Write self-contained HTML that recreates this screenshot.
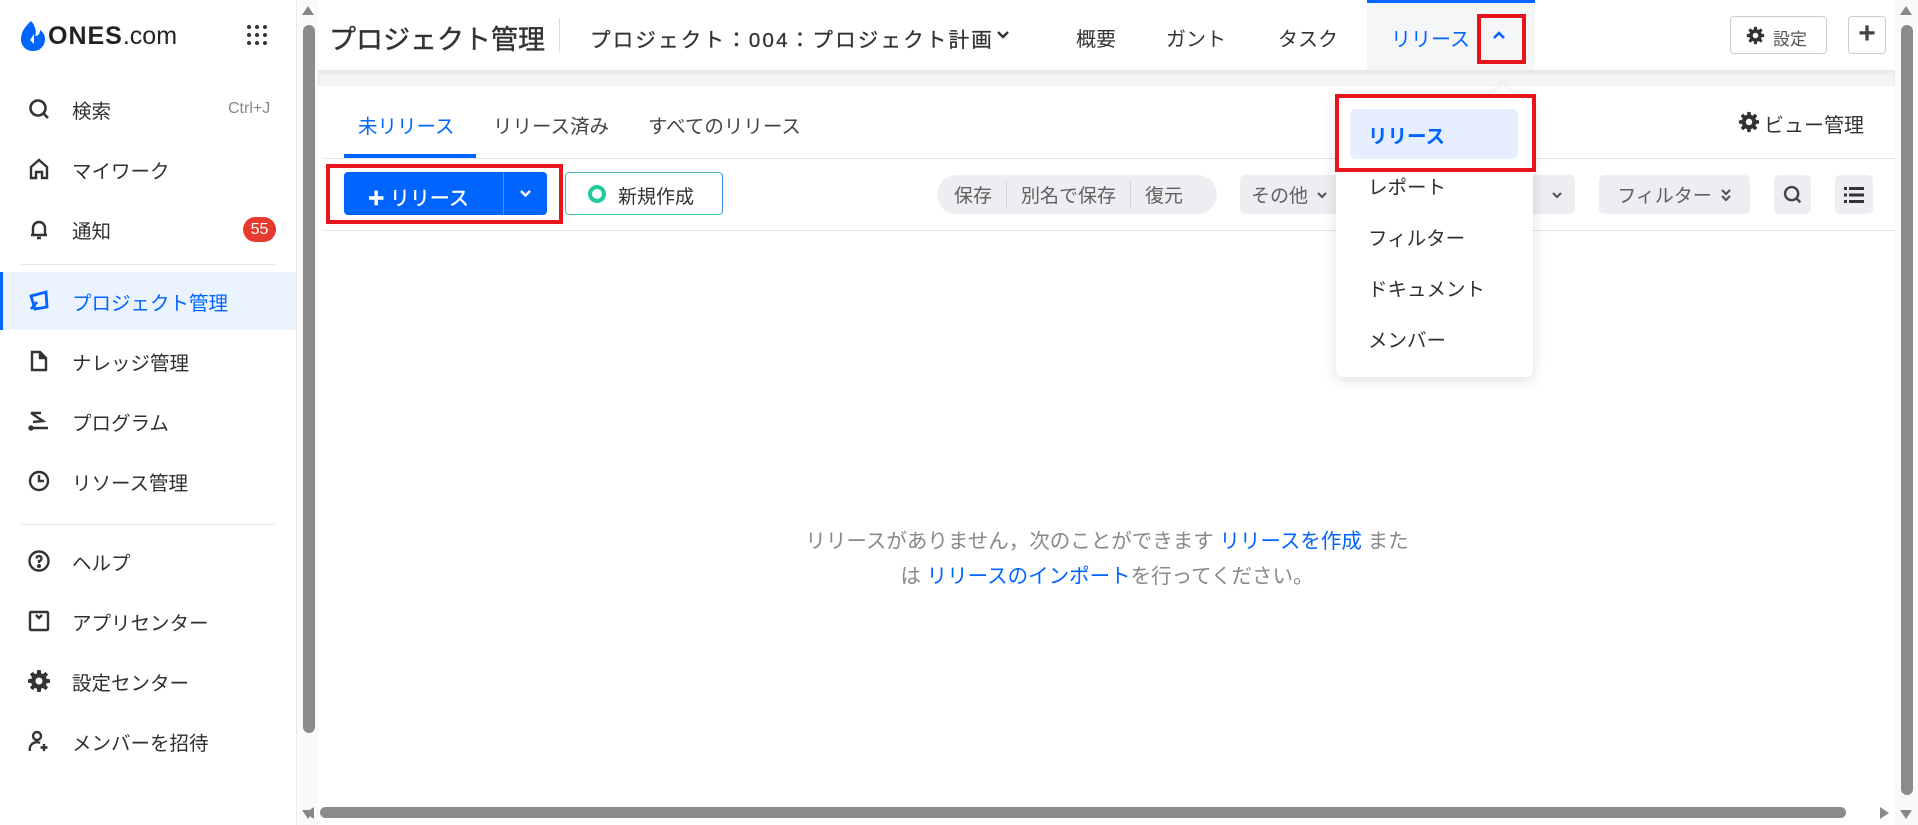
<!DOCTYPE html>
<html><head><meta charset="utf-8">
<style>
*{margin:0;padding:0;box-sizing:border-box}
body{width:1918px;height:825px;overflow:hidden;background:#fff;font-family:"Liberation Sans","Noto Sans CJK JP",sans-serif;color:#303030;position:relative}
.a{position:absolute;white-space:nowrap}
.side{position:absolute;left:0;top:0;width:297px;height:825px;border-right:1px solid #e8e8e8;background:#fff}
.it{position:absolute;left:0;width:296px;height:58px;display:flex;align-items:center;font-size:19.5px;color:#303030}
.it svg{position:absolute;left:27px;width:24px;height:24px}
.it span{position:absolute;left:72px}
.g{background:#eceef1;border-radius:5px;font-size:19px;color:#606060;display:flex;align-items:center;justify-content:center}
.dd{font-size:19.5px;color:#303030;left:1368px}
</style></head><body>
<svg width="0" height="0" style="position:absolute"><defs>
<g id="gear"><g fill="#333"><rect x="10" y="1" width="4" height="22" rx="1"/><rect x="10" y="1" width="4" height="22" rx="1" transform="rotate(45 12 12)"/><rect x="10" y="1" width="4" height="22" rx="1" transform="rotate(90 12 12)"/><rect x="10" y="1" width="4" height="22" rx="1" transform="rotate(135 12 12)"/><circle cx="12" cy="12" r="8"/></g><circle cx="12" cy="12" r="3.5" fill="#fff"/></g>
</defs></svg>
<div class="side">
  <svg class="a" style="left:20px;top:20px" width="26" height="32" viewBox="0 0 26 32"><path d="M11 1 C6 6 1 11 1 19 C1 26 6 31 13 31 C20 31 25 26 25 19 C25 15 23 12 20 10 C20 14 18 16 15 16 C17 12 15 5 11 1Z" fill="#0064ff"/><path d="M10 20 L14 14 L14 24 Z" fill="#fff"/></svg>
  <div class="a" style="left:48px;top:22px;font-size:25px;font-weight:bold;color:#222;letter-spacing:1px">ONES<span style="font-weight:normal;letter-spacing:0">.com</span></div>
  <svg class="a" style="left:246px;top:24px" width="22" height="22" viewBox="0 0 22 22" fill="#333"><circle cx="3" cy="3" r="2"/><circle cx="11" cy="3" r="2"/><circle cx="19" cy="3" r="2"/><circle cx="3" cy="11" r="2"/><circle cx="11" cy="11" r="2"/><circle cx="19" cy="11" r="2"/><circle cx="3" cy="19" r="2"/><circle cx="11" cy="19" r="2"/><circle cx="19" cy="19" r="2"/></svg>

  <div class="it" style="top:80px"><svg viewBox="0 0 24 24" fill="none" stroke="#333" stroke-width="2.6"><circle cx="11" cy="11" r="7.5"/><path d="M16.5 16.5 L21 21"/></svg><span>検索</span><span style="left:228px;font-size:16px;color:#888">Ctrl+J</span></div>
  <div class="it" style="top:140px"><svg viewBox="0 0 24 24" fill="none" stroke="#333" stroke-width="2.4"><path d="M4 21 V10 L12 3 L20 10 V21 H15 V15 H9 V21Z"/></svg><span>マイワーク</span></div>
  <div class="it" style="top:200px"><svg viewBox="0 0 24 24" fill="none" stroke="#333" stroke-width="2.4"><path d="M6 18 V11 A6 6 0 0 1 18 11 V18 Z M4 18 H20 M10 21 H14"/></svg><span>通知</span><span style="left:243px;background:#e8392e;color:#fff;border-radius:13px;width:33px;height:25px;font-size:16px;text-align:center;line-height:25px">55</span></div>
  <div style="position:absolute;left:21px;top:264px;width:254px;height:1px;background:#e5e5e5"></div>
  <div class="it" style="top:272px;background:#ebf3ff;color:#0064ff;border-left:3px solid #0064ff"><svg viewBox="0 0 24 24" fill="none" stroke="#0064ff" stroke-width="2.8" style="left:24px"><path d="M4 7 L19 3 L20 18 L8 20 Z"/><path d="M4 20 L10 13" /></svg><span style="left:69px">プロジェクト管理</span></div>
  <div class="it" style="top:332px"><svg viewBox="0 0 24 24" fill="none" stroke="#333" stroke-width="2.4"><path d="M5 3 H13 L19 9 V21 H5 Z"/><path d="M13 3 V9 H19" fill="#333"/></svg><span>ナレッジ管理</span></div>
  <div class="it" style="top:392px"><svg viewBox="0 0 24 24" fill="none" stroke="#333" stroke-width="2.4"><path d="M4 4 H14 M4 4 L16 12 L6 13 M5 19 H21"/><circle cx="4" cy="19" r="1.5" fill="#333"/></svg><span>プログラム</span></div>
  <div class="it" style="top:452px"><svg viewBox="0 0 24 24" fill="none" stroke="#333" stroke-width="2.4"><circle cx="12" cy="12" r="9"/><path d="M12 6 V12 H17"/></svg><span>リソース管理</span></div>
  <div style="position:absolute;left:21px;top:524px;width:254px;height:1px;background:#e5e5e5"></div>
  <div class="it" style="top:532px"><svg viewBox="0 0 24 24" fill="none" stroke="#333" stroke-width="2.4"><circle cx="12" cy="12" r="9.5"/><path d="M9.5 9.5 A2.5 2.5 0 1 1 12 12 V14"/><circle cx="12" cy="17" r="0.8" fill="#333"/></svg><span>ヘルプ</span></div>
  <div class="it" style="top:592px"><svg viewBox="0 0 24 24" fill="none" stroke="#333" stroke-width="2.4"><rect x="3" y="3" width="18" height="18" rx="1"/><path d="M9 6 L12 9 L15 6"/></svg><span>アプリセンター</span></div>
  <div class="it" style="top:652px"><svg viewBox="0 0 24 24"><use href="#gear"/></svg><span>設定センター</span></div>
  <div class="it" style="top:712px"><svg viewBox="0 0 24 24" fill="none" stroke="#333" stroke-width="2.4"><circle cx="10" cy="7" r="4"/><path d="M3 22 A7 7 0 0 1 13 14 M17 15 V22 M13.5 18.5 H20.5"/></svg><span>メンバーを招待</span></div>
</div>

<div class="a" style="left:298px;top:0;width:20px;height:825px;background:#fafafa"></div>
<div class="a" style="left:302px;top:6px;width:0;height:0;border-left:6px solid transparent;border-right:6px solid transparent;border-bottom:9px solid #888"></div>
<div class="a" style="left:303px;top:25px;width:12px;height:708px;background:#8b8b8b;border-radius:6px"></div>
<div class="a" style="left:302px;top:810px;width:0;height:0;border-left:6px solid transparent;border-right:6px solid transparent;border-top:9px solid #888"></div>

<div class="a" style="left:318px;top:70px;width:1577px;height:16px;background:#f3f4f5;box-shadow:inset 0 3px 4px rgba(0,0,0,.06)"></div>
<div class="a" style="left:329px;top:18px;font-size:27px;color:#333;-webkit-text-stroke:0.4px #333">プロジェクト管理</div>
<div class="a" style="left:559px;top:18px;width:1px;height:34px;background:#ddd"></div>
<div class="a" style="left:590px;top:23px;font-size:20.5px;color:#333;-webkit-text-stroke:0.3px #333;letter-spacing:2.2px">プロジェクト：004：プロジェクト計画</div>
<svg class="a" style="left:996px;top:30px" width="14" height="10" viewBox="0 0 14 10"><path d="M2 2 L7 7 L12 2" fill="none" stroke="#333" stroke-width="2.4"/></svg>
<div class="a" style="left:1367px;top:0;width:168px;height:70px;background:#f5f6f7"></div>
<div class="a" style="left:1367px;top:0;width:168px;height:3px;background:#0064ff"></div>
<div class="a" style="left:1076px;top:23px;font-size:20px;color:#333">概要</div>
<div class="a" style="left:1166px;top:23px;font-size:20px;color:#333">ガント</div>
<div class="a" style="left:1278px;top:23px;font-size:20px;color:#333">タスク</div>
<div class="a" style="left:1391px;top:23px;font-size:20px;color:#0064ff">リリース</div>
<svg class="a" style="left:1492px;top:30px" width="14" height="10" viewBox="0 0 14 10"><path d="M2 8 L7 3 L12 8" fill="none" stroke="#0064ff" stroke-width="2.5"/></svg>
<div class="a" style="left:1477px;top:14px;width:49px;height:50px;border:4px solid #e8141c"></div>
<div class="a" style="left:1730px;top:16px;width:97px;height:38px;border:1px solid #ccc;border-radius:4px;font-size:17px;color:#555;padding:8px 0 0 42px">設定</div>
<svg class="a" style="left:1746px;top:26px" width="19" height="19" viewBox="0 0 24 24"><use href="#gear"/></svg>
<div class="a" style="left:1848px;top:16px;width:38px;height:38px;border:1px solid #ccc;border-radius:4px;font-size:30px;font-weight:bold;color:#444;text-align:center;line-height:34px">+</div>

<div class="a" style="left:1895px;top:0;width:23px;height:825px;background:#fafafa"></div>
<div class="a" style="left:1900px;top:6px;width:0;height:0;border-left:6px solid transparent;border-right:6px solid transparent;border-bottom:9px solid #888"></div>
<div class="a" style="left:1901px;top:25px;width:12px;height:770px;background:#8b8b8b;border-radius:6px"></div>
<div class="a" style="left:1900px;top:810px;width:0;height:0;border-left:6px solid transparent;border-right:6px solid transparent;border-top:9px solid #888"></div>
<div class="a" style="left:305px;top:807px;width:0;height:0;border-top:6px solid transparent;border-bottom:6px solid transparent;border-right:9px solid #888"></div>
<div class="a" style="left:320px;top:807px;width:1526px;height:11px;background:#8b8b8b;border-radius:6px"></div>
<div class="a" style="left:1880px;top:807px;width:0;height:0;border-top:6px solid transparent;border-bottom:6px solid transparent;border-left:9px solid #888"></div>

<div class="a" style="left:358px;top:110px;font-size:19.5px;color:#0064ff">未リリース</div>
<div class="a" style="left:493px;top:110px;font-size:19.5px;color:#444">リリース済み</div>
<div class="a" style="left:648px;top:110px;font-size:19.5px;color:#444">すべてのリリース</div>
<div class="a" style="left:344px;top:154px;width:132px;height:4px;background:#0064ff"></div>
<div class="a" style="left:323px;top:158px;width:1572px;height:1px;background:#e3e3e3"></div>
<svg class="a" style="left:1738px;top:111px" width="22" height="22" viewBox="0 0 24 24"><use href="#gear"/></svg>
<div class="a" style="left:1764px;top:109px;font-size:20px;color:#333">ビュー管理</div>

<div class="a" style="left:344px;top:172px;width:203px;height:43px;background:#0064ff;border-radius:4px;color:#fff;font-size:20px;padding:10px 0 0 24px;-webkit-text-stroke:0.4px #fff"><span style="font-size:28px;line-height:20px;vertical-align:-2px;font-weight:bold">+</span> リリース</div>
<div class="a" style="left:503px;top:172px;width:1px;height:43px;background:#4a8dff"></div>
<svg class="a" style="left:519px;top:189px" width="13" height="9" viewBox="0 0 13 9"><path d="M2 2 L6.5 6.5 L11 2" fill="none" stroke="#fff" stroke-width="2.4"/></svg>
<div class="a" style="left:326px;top:164px;width:237px;height:60px;border:4px solid #e8141c"></div>
<div class="a" style="left:565px;top:172px;width:158px;height:43px;border:1px solid #3bc8a8;border-right-color:#3a88ff;border-top-color:#5bb5d0;border-radius:4px;font-size:19px;color:#333;padding:9px 0 0 52px">新規作成</div>
<div class="a" style="left:588px;top:185px;width:18px;height:18px;border:4px solid #20c9a0;border-radius:50%"></div>

<div class="a g" style="left:937px;top:175px;width:280px;height:39px;border-radius:20px;justify-content:flex-start;padding-left:17px">保存<span style="width:1px;height:28px;background:#d5d5d5;margin:0 14px"></span>別名で保存<span style="width:1px;height:28px;background:#d5d5d5;margin:0 14px"></span>復元</div>
<div class="a g" style="left:1240px;top:175px;width:110px;height:39px;justify-content:flex-start;padding-left:11px">その他<svg style="margin-left:8px" width="12" height="8" viewBox="0 0 12 8"><path d="M2 2 L6 6 L10 2" fill="none" stroke="#555" stroke-width="2.2"/></svg></div>
<div class="a g" style="left:1520px;top:175px;width:55px;height:39px;justify-content:flex-end;padding-right:12px"><svg width="12" height="8" viewBox="0 0 12 8"><path d="M2 2 L6 6 L10 2" fill="none" stroke="#555" stroke-width="2.2"/></svg></div>
<div class="a g" style="left:1599px;top:175px;width:151px;height:39px">フィルター<svg style="margin-left:8px" width="12" height="14" viewBox="0 0 12 14"><path d="M2 2 L6 6 L10 2 M2 8 L6 12 L10 8" fill="none" stroke="#555" stroke-width="2.2"/></svg></div>
<div class="a g" style="left:1774px;top:175px;width:37px;height:39px"><svg width="21" height="21" viewBox="0 0 24 24" fill="none" stroke="#444" stroke-width="2.8"><circle cx="11" cy="11" r="7.5"/><path d="M16.5 16.5 L21 21"/></svg></div>
<div class="a g" style="left:1835px;top:175px;width:38px;height:39px"><svg width="20" height="18" viewBox="0 0 20 18" fill="#333"><rect x="0" y="1" width="3" height="3"/><rect x="5" y="1" width="15" height="3"/><rect x="0" y="7.5" width="3" height="3"/><rect x="5" y="7.5" width="15" height="3"/><rect x="0" y="14" width="3" height="3"/><rect x="5" y="14" width="15" height="3"/></svg></div>
<div class="a" style="left:323px;top:230px;width:1572px;height:1px;background:#e3e3e3"></div>

<div class="a" style="left:0;width:2214px;top:524px;text-align:center;font-size:20.5px;color:#888;line-height:35px">リリースがありません，次のことができます <span style="color:#0064ff">リリースを作成</span> また<br>は <span style="color:#0064ff">リリースのインポート</span>を行ってください。</div>

<div class="a" style="left:1336px;top:94px;width:197px;height:283px;background:#fff;border-radius:6px;box-shadow:0 3px 14px rgba(0,0,0,.13)"></div>
<div class="a" style="left:1496px;top:87px;width:14px;height:14px;background:#fff;transform:rotate(45deg);box-shadow:-2px -2px 4px rgba(0,0,0,.04)"></div>
<div class="a" style="left:1350px;top:109px;width:168px;height:50px;background:#e5efff;border-radius:6px"></div>
<div class="a dd" style="top:120px;color:#0064ff;font-weight:bold">リリース</div>
<div class="a dd" style="top:171px">レポート</div>
<div class="a dd" style="top:222px">フィルター</div>
<div class="a dd" style="top:273px">ドキュメント</div>
<div class="a dd" style="top:324px">メンバー</div>
<div class="a" style="left:1335px;top:94px;width:201px;height:78px;border:4px solid #e8141c"></div>
</body></html>
